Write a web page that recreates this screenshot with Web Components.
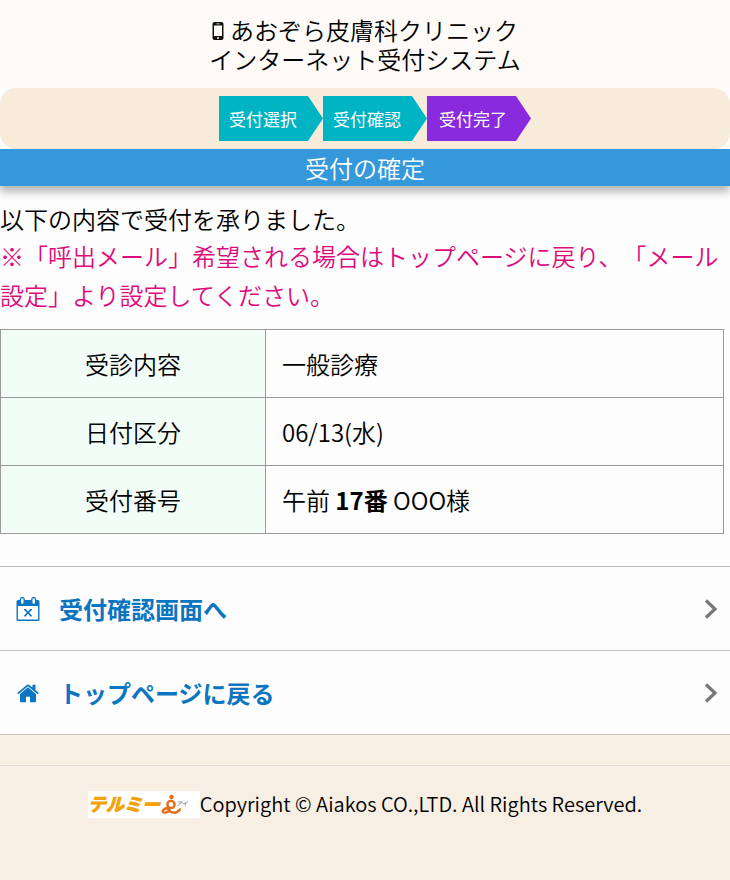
<!DOCTYPE html>
<html lang="ja">
<head>
<meta charset="utf-8">
<meta name="viewport" content="width=device-width, initial-scale=1">
<title>受付の確定</title>
<style>
  body{
    margin: 0;
    background: #f8efe4;
    color: #000;
    font-family: "Noto Sans CJK JP", "Noto Sans", sans-serif;
    font-size: 24px;
    font-weight: 350;
    text-spacing-trim: space-all;
  }
</style>
</head>
<body>
<reception-page>
  <site-header slot="header">あおぞら皮膚科クリニック<br>インターネット受付システム</site-header>
  <step-list slot="header">
    <step-item>受付選択</step-item>
    <step-item>受付確認</step-item>
    <step-item current>受付完了</step-item>
  </step-list>
  <page-title slot="header">受付の確定</page-title>

  <reception-message>
    以下の内容で受付を承りました。
    <span slot="notice">※「呼出メール」希望される場合はトップページに戻り、「メール設定」より設定してください。</span>
  </reception-message>
  <reception-table></reception-table>
  <nav-list>
    <nav-item icon="calendar" href="#confirm">受付確認画面へ</nav-item>
    <nav-item icon="home" href="#top">トップページに戻る</nav-item>
  </nav-list>

  <site-footer slot="footer">Copyright © Aiakos CO.,LTD. All Rights Reserved.</site-footer>
</reception-page>

<script>
function define(name, html, setup){
  const template = document.createElement('template');
  template.innerHTML = html;

  window.customElements.define(name, class extends HTMLElement {
    constructor() {
      super();
      this.attachShadow({ mode: 'open' });
      this.shadowRoot.appendChild(template.content.cloneNode(true));
    }

    connectedCallback() {
      if(setup) setup(this, this.shadowRoot)
    }
  });
}

define("reception-page", `
  <style>
    :host{display: block;}
    main{background: #fdfdfd;}
  </style>
  <slot name="header"></slot>
  <main><slot></slot></main>
  <slot name="footer"></slot>
`);

define("site-header", `
  <style>
    :host{display: block; background: #fefaf7;}
    header{padding: 15px 0;}
    h1{
      margin: 0;
      font-size: 24px;
      font-weight: inherit;
      line-height: 29px;
      text-align: center;
    }
    svg{width: 12px; height: 18px; margin-right: 6px;}
  </style>
  <header>
    <h1><svg viewBox="0 0 12 18" aria-hidden="true">
      <path fill="#111" fill-rule="evenodd" d="M2.5 0h7A2 2 0 0 1 11.500 2v14a2 2 0 0 1-2 2h-7a2 2 0 0 1-2-2V2a2 2 0 0 1 2-2zM2 3.500v10.500h8V3.500zM4.500 1.500v.7h3v-.7zM6 15a1 1 0 1 0 0 2a1 1 0 0 0 0-2z"/>
    </svg><slot></slot></h1>
  </header>
`);

define("step-list", `
  <style>
    :host{display: block; background: #fdfdfd;}
    div{
      display: flex;
      justify-content: center;
      padding: 8px 0 8px 20px;
      background: #f7ecda;
      border-radius: 16px;
    }
  </style>
  <div role="list"><slot></slot></div>
`);

define("step-item", `
  <style>
    :host{
      display: block;
      box-sizing: border-box;
      width: 104px;
      padding-left: 10px;
      background: #00b4c3;
      color: #fff;
      font-size: 17px;
      font-weight: normal;
      line-height: 45px;
      clip-path: polygon(0 0, calc(100% - 15px) 0, 100% 50%, calc(100% - 15px) 100%, 0 100%);
    }
    :host([current]){background: #8a2adf; padding-left: 12px;}
  </style>
  <slot></slot>
`, el => el.setAttribute("role", "listitem"));

define("page-title", `
  <style>
    :host{display: block; position: relative;}
    h2{
      margin: 0;
      background: #3498db;
      color: #fff;
      font-size: 24px;
      font-weight: inherit;
      line-height: 37px;
      text-align: center;
      box-shadow: 0 6px 8px rgba(0,0,0,.28);
    }
  </style>
  <h2><slot></slot></h2>
`);

define("reception-message", `
  <style>
    :host{display: block; padding: 15px 0;}
    p{margin: 0; line-height: 35px;}
    .notice{color: #dc0c7c; line-height: 39px;}
  </style>
  <p><slot></slot></p>
  <p class="notice"><slot name="notice"></slot></p>
`);

define("reception-table", `
  <style>
    :host{display: block; padding-right: 6px;}
    table{
      width: 100%;
      border-collapse: collapse;
      table-layout: fixed;
    }
    th, td{
      padding: 16px;
      border: 1px solid #999;
      font-weight: inherit;
      line-height: 35px;
      text-align: left;
    }
    th{
      width: 232px;
      background: #f3fdf8;
      text-align: center;
    }
    b{font-weight: 700;}
  </style>
  <table>
    <tbody>
      <tr><th scope="row">受診内容</th><td>一般診療</td></tr>
      <tr><th scope="row">日付区分</th><td>06/13(水)</td></tr>
      <tr><th scope="row">受付番号</th><td>午前 <b>17番</b> OOO様</td></tr>
    </tbody>
  </table>
`);

define("nav-list", `
  <style>
    :host{display: block; padding-top: 32px;}
    nav{border-top: 1px solid #bbb;}
  </style>
  <nav><slot></slot></nav>
`);

const icons = {
  calendar: `
    <svg viewBox="0 0 24 24" aria-hidden="true">
      <path fill="currentColor" fill-rule="evenodd" d="M2 3h20a1.500 1.500 0 0 1 1.500 1.500v18A1.500 1.500 0 0 1 22 24H2a1.500 1.500 0 0 1-1.500-1.500v-18A1.500 1.500 0 0 1 2 3zM1.900 9v13.600h20.200V9z"/>
      <g fill="#fdfdfd" stroke="currentColor" stroke-width="1.300">
        <rect x="4.400" y=".6" width="3.800" height="6.800" rx="1.900"/>
        <rect x="15.800" y=".6" width="3.800" height="6.800" rx="1.900"/>
      </g>
      <path fill="none" stroke="currentColor" stroke-width="1.600" d="M8.900 12.600l6.200 6.200M15.100 12.600L8.900 18.800"/>
      <path stroke="currentColor" stroke-width="1" d="M8 12.500h2.300M13.700 12.500h2.300M8 18.900h2.300M13.700 18.900h2.300"/>
    </svg>`,
  home: `
    <svg viewBox="0 0 24 24" aria-hidden="true">
      <path fill="currentColor" d="M12 6.300L20 13v7.300a1 1 0 0 1-1 1h-5v-5.600h-4v5.600H5a1 1 0 0 1-1-1V13z"/>
      <path fill="currentColor" d="M1.200 11.900L10.800 3.900q1.200-.9 2.400 0l3.300 2.700V3.700h3v5.400l3.400 2.800-1.100 1.300L12 5.200 2.300 13.200z"/>
    </svg>`
}

define("nav-item", `
  <style>
    :host{display: block;}
    a{
      display: flex;
      align-items: center;
      gap: 19px;
      padding: 24px 12px 23px 16px;
      border-bottom: 1px solid #c4c4c4;
      color: #0b75c2;
      font-weight: bold;
      line-height: 36px;
      text-decoration: none;
    }
    .icon{display: flex;}
    .icon svg{width: 24px; height: 24px;}
    .label{flex: 1;}
    .arrow{width: 14px; height: 20px;}
  </style>
  <a>
    <span class="icon"></span>
    <span class="label"><slot></slot></span>
    <svg class="arrow" viewBox="0 0 14 20" aria-hidden="true">
      <path fill="none" stroke="#787878" stroke-width="3.200" d="M2 1.500l9 8.500-9 8.500"/>
    </svg>
  </a>
`, (el, root) => {
  root.querySelector("a").setAttribute("href", el.getAttribute("href"))
  root.querySelector(".icon").innerHTML = icons[el.getAttribute("icon")]
});

define("telmee-logo", `
  <style>
    :host{display: block; background: #fff;}
    svg{display: block; width: 112px; height: 27px;}
  </style>
  <svg viewBox="0 0 112 27" role="img" aria-label="テルミーアイ">
    <text x="0" y="20" fill="#f2a20d" stroke="#f2a20d" stroke-width="1" stroke-linejoin="round" font-size="18" font-weight="bold" font-style="italic">テルミー</text>
    <g fill="none" stroke="#e96a12" stroke-linecap="round">
      <circle cx="83.500" cy="6" r="2.200" fill="#e96a12" stroke="none"/>
      <circle cx="83" cy="13.500" r="3.600" stroke-width="2.400"/>
      <path stroke-width="2.400" d="M80.500 16.500c-4 .8-6.500 3-5.500 4.500c1.200 1.500 4.500.2 6.500-1.700M80 18c2.500 4.500 8.500 5 12 .5"/>
    </g>
    <text x="88" y="15" fill="#8a97a8" font-size="6" font-weight="bold" font-style="italic">アイ</text>
  </svg>
`);

define("site-footer", `
  <style>
    :host{display: block; padding-top: 30px;}
    footer{
      display: flex;
      flex-wrap: wrap;
      justify-content: center;
      align-items: center;
      padding: 24px 0;
      border-top: 1px solid #dcdcdc;
      font-size: 20px;
      line-height: 28px;
    }
    small{font-size: inherit;}
  </style>
  <footer>
    <telmee-logo></telmee-logo>
    <small><slot></slot></small>
  </footer>
`);
</script>
</body>
</html>
